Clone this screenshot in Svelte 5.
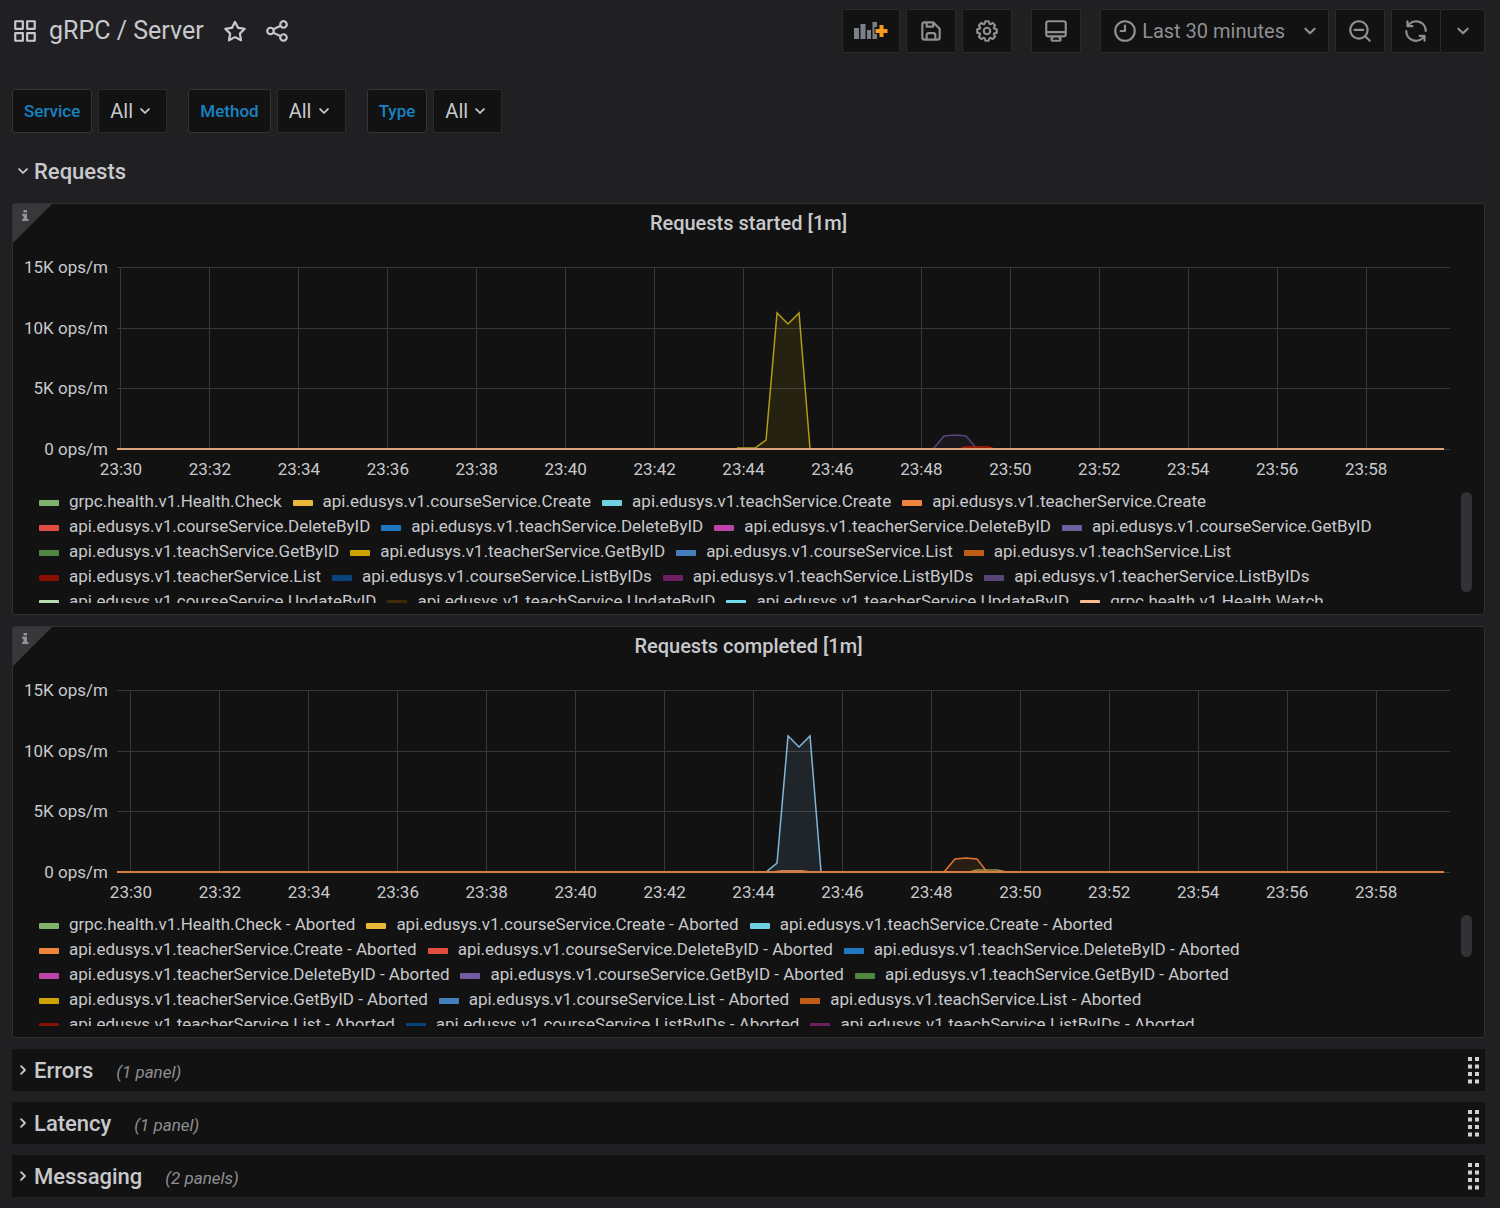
<script lang="ts">
  type Series = { color: string, points: string, fill?: boolean };
  type Panel = {
    title: string,
    offset: number,
    suffix: string,
    legend: [string, string][],
    series: Series[],
    thumb: number
  };

  const icons = {
    apps: "M10,13H3a1,1,0,0,0-1,1v7a1,1,0,0,0,1,1h7a1,1,0,0,0,1-1V14A1,1,0,0,0,10,13ZM9,20H4V15H9ZM21,2H14a1,1,0,0,0-1,1v7a1,1,0,0,0,1,1h7a1,1,0,0,0,1-1V3A1,1,0,0,0,21,2ZM20,9H15V4h5Zm1,4H14a1,1,0,0,0-1,1v7a1,1,0,0,0,1,1h7a1,1,0,0,0,1-1V14A1,1,0,0,0,21,13Zm-1,7H15V15h5ZM10,2H3A1,1,0,0,0,2,3v7a1,1,0,0,0,1,1h7a1,1,0,0,0,1-1V3A1,1,0,0,0,10,2ZM9,9H4V4H9Z",
    star: "M22,9.67A1,1,0,0,0,21.14,9l-5.69-.83L12.9,3a1,1,0,0,0-1.8,0L8.55,8.16,2.86,9a1,1,0,0,0-.81.68,1,1,0,0,0,.25,1l4.13,4-1,5.68A1,1,0,0,0,6.9,21.44L12,18.77l5.1,2.67a.93.93,0,0,0,.46.12,1,1,0,0,0,.59-.19,1,1,0,0,0,.4-1l-1-5.68,4.13-4A1,1,0,0,0,22,9.67Zm-6.15,4a1,1,0,0,0-.29.88l.72,4.2-3.76-2a1.06,1.06,0,0,0-.94,0l-3.76,2,.72-4.2a1,1,0,0,0-.29-.88l-3-3,4.21-.61a1,1,0,0,0,.76-.55L12,5.7l1.88,3.82a1,1,0,0,0,.76.55l4.21.61Z",
    share: "M18,14a4,4,0,0,0-3.08,1.48l-5.1-2.35a3.64,3.64,0,0,0,0-2.26l5.1-2.35A4,4,0,1,0,14,6a4.17,4.17,0,0,0,.07.71L8.79,9.14a4,4,0,1,0,0,5.72l5.28,2.43A4.17,4.17,0,0,0,14,18a4,4,0,1,0,4-4ZM18,4a2,2,0,1,1-2,2A2,2,0,0,1,18,4ZM6,14a2,2,0,1,1,2-2A2,2,0,0,1,6,14Zm12,6a2,2,0,1,1,2-2A2,2,0,0,1,18,20Z",
    save: "M20.71,9.29l-6-6a1,1,0,0,0-.32-.21A1.09,1.09,0,0,0,14,3H6A3,3,0,0,0,3,6V18a3,3,0,0,0,3,3H18a3,3,0,0,0,3-3V10A1,1,0,0,0,20.71,9.29ZM9,5h4V7H9Zm6,14H9V16a1,1,0,0,1,1-1h4a1,1,0,0,1,1,1Zm4-1a1,1,0,0,1-1,1H17V16a3,3,0,0,0-3-3H10a3,3,0,0,0-3,3v3H6a1,1,0,0,1-1-1V6A1,1,0,0,1,6,5H7V8A1,1,0,0,0,8,9h6a1,1,0,0,0,1-1V6.41l4,4Z",
    cog: "M21.32,9.55l-1.89-.63.89-1.78A1,1,0,0,0,20.13,6L18,3.87a1,1,0,0,0-1.15-.19l-1.78.89-.63-1.89A1,1,0,0,0,13.5,2h-3a1,1,0,0,0-.95.68L8.92,4.57,7.14,3.68A1,1,0,0,0,6,3.87L3.87,6a1,1,0,0,0-.19,1.15l.89,1.78-1.89.63A1,1,0,0,0,2,10.5v3a1,1,0,0,0,.68.95l1.89.63-.89,1.78A1,1,0,0,0,3.87,18L6,20.13a1,1,0,0,0,1.15.19l1.78-.89.63,1.89a1,1,0,0,0,.95.68h3a1,1,0,0,0,.95-.68l.63-1.89,1.78.89A1,1,0,0,0,18,20.13L20.13,18a1,1,0,0,0,.19-1.15l-.89-1.78,1.89-.63A1,1,0,0,0,22,13.5v-3A1,1,0,0,0,21.32,9.55ZM20,12.78l-1.2.4A2,2,0,0,0,17.64,16l.57,1.14-1.1,1.1L16,17.64a2,2,0,0,0-2.79,1.16l-.4,1.2H11.22l-.4-1.2A2,2,0,0,0,8,17.64l-1.14.57-1.1-1.1L6.36,16A2,2,0,0,0,5.2,13.18L4,12.78V11.22l1.2-.4A2,2,0,0,0,6.36,8L5.79,6.89l1.1-1.1L8,6.36A2,2,0,0,0,10.82,5.2l.4-1.2h1.56l.4,1.2A2,2,0,0,0,16,6.36l1.14-.57,1.1,1.1L17.64,8a2,2,0,0,0,1.16,2.79l1.2.4ZM12,8a4,4,0,1,0,4,4A4,4,0,0,0,12,8Zm0,6a2,2,0,1,1,2-2A2,2,0,0,1,12,14Z",
    monitor: "M19,2H5A3,3,0,0,0,2,5V15a3,3,0,0,0,3,3H7.64l-.58,1a2,2,0,0,0,0,2,2,2,0,0,0,1.75,1h6.46A2,2,0,0,0,17,21a2,2,0,0,0,0-2l-.59-1H19a3,3,0,0,0,3-3V5A3,3,0,0,0,19,2ZM8.77,20,10,18H14l1.2,2ZM20,15a1,1,0,0,1-1,1H5a1,1,0,0,1-1-1V14H20Zm0-3H4V5A1,1,0,0,1,5,4H19a1,1,0,0,1,1,1Z",
    clock: "M12,2A10,10,0,1,0,22,12,10,10,0,0,0,12,2Zm0,18a8,8,0,1,1,8-8A8,8,0,0,1,12,20ZM12,6a1,1,0,0,0-1,1v4H8a1,1,0,0,0,0,2h4a1,1,0,0,0,1-1V7A1,1,0,0,0,12,6Z",
    down: "M17,9.17a1,1,0,0,0-1.41,0L12,12.71,8.46,9.17a1,1,0,0,0-1.41,0,1,1,0,0,0,0,1.42l4.24,4.24a1,1,0,0,0,1.42,0L17,10.59A1,1,0,0,0,17,9.17Z",
    right: "M14.83,11.29,10.59,7.05a1,1,0,0,0-1.42,0,1,1,0,0,0,0,1.41L12.71,12,9.17,15.54a1,1,0,0,0,0,1.41,1,1,0,0,0,.71.29,1,1,0,0,0,.71-.29l4.24-4.24A1,1,0,0,0,14.83,11.29Z",
    zoomOut: "M21.71,20.29,18,16.61A9,9,0,1,0,16.61,18l3.68,3.68a1,1,0,0,0,1.42,0A1,1,0,0,0,21.71,20.29ZM11,18a7,7,0,1,1,7-7A7,7,0,0,1,11,18Zm4-8H7a1,1,0,0,0,0,2h8a1,1,0,0,0,0-2Z",
    sync: "M19.91,15.51H15.38a1,1,0,0,0,0,2h2.4A8,8,0,0,1,4,12a1,1,0,0,0-2,0,10,10,0,0,0,16.88,7.23V21a1,1,0,0,0,2,0V16.5A1,1,0,0,0,19.91,15.51ZM12,2A10,10,0,0,0,5.12,4.77V3a1,1,0,0,0-2,0V7.5a1,1,0,0,0,1,1h4.5a1,1,0,0,0,0-2H6.22A8,8,0,0,1,20,12a1,1,0,0,0,2,0A10,10,0,0,0,12,2Z"
  };

  const variables = ["Service", "Method", "Type"];
  const selected = $state({ Service: "All", Method: "All", Type: "All" });

  const methods: [string, string][] = [
    ["grpc.health.v1.Health.Check", "#7eb26d"],
    ["api.edusys.v1.courseService.Create", "#eab839"],
    ["api.edusys.v1.teachService.Create", "#6ed0e0"],
    ["api.edusys.v1.teacherService.Create", "#ef843c"],
    ["api.edusys.v1.courseService.DeleteByID", "#e24d42"],
    ["api.edusys.v1.teachService.DeleteByID", "#1f78c1"],
    ["api.edusys.v1.teacherService.DeleteByID", "#ba43a9"],
    ["api.edusys.v1.courseService.GetByID", "#705da0"],
    ["api.edusys.v1.teachService.GetByID", "#508642"],
    ["api.edusys.v1.teacherService.GetByID", "#cca300"],
    ["api.edusys.v1.courseService.List", "#447ebc"],
    ["api.edusys.v1.teachService.List", "#c15c17"],
    ["api.edusys.v1.teacherService.List", "#890f02"],
    ["api.edusys.v1.courseService.ListByIDs", "#0a437c"],
    ["api.edusys.v1.teachService.ListByIDs", "#6d1f62"],
    ["api.edusys.v1.teacherService.ListByIDs", "#584477"],
    ["api.edusys.v1.courseService.UpdateByID", "#b7dbab"],
    ["api.edusys.v1.teachService.UpdateByID", "#3f2b05"],
    ["api.edusys.v1.teacherService.UpdateByID", "#70dbed"],
    ["grpc.health.v1.Health.Watch", "#f9ba8f"]
  ];

  // points live on a 1333 x 182 plot, 182 is zero ops/m
  const panels: Panel[] = [
    {
      title: "Requests started [1m]",
      offset: 4,
      suffix: "",
      legend: methods,
      thumb: 100,
      series: [
        { color: "#584477", points: "816,182 827,169 838,168 849,169 860,182", fill: true },
        { color: "#bf1b00", points: "843,182 848,180 872,180 877,182" },
        { color: "#b29a17", points: "620,181 638,181 649,173 660,46 671,57 682,46 693,182", fill: true },
        { color: "#dba47c", points: "0,182 1327,182" }
      ]
    },
    {
      title: "Requests completed [1m]",
      offset: 14,
      suffix: " - Aborted",
      legend: methods,
      thumb: 42,
      series: [
        { color: "#82b5d8", points: "649,182 660,173 671,46 682,57 693,46 704,182", fill: true },
        { color: "#e0752d", points: "827,182 838,169 849,168 860,169 870,182", fill: true },
        { color: "#9a9640", points: "852,182 860,180 880,180 890,182" },
        { color: "#e5a878", points: "655,182 665,181 685,181 695,182" },
        { color: "#dc7b41", points: "0,182 1327,182" }
      ]
    }
  ];

  const yTicks = ["15K ops/m", "10K ops/m", "5K ops/m", "0 ops/m"];
  const xTicks = Array.from({ length: 15 }, (_, i) => `23:${30 + i * 2}`);

  const xPos = (offset: number, i: number) => `${(((offset + i * 88.93) / 1333) * 100).toFixed(3)}%`;

  const closedRows = [
    { title: "Errors", count: "(1 panel)" },
    { title: "Latency", count: "(1 panel)" },
    { title: "Messaging", count: "(2 panels)" }
  ];
</script>

{#snippet icon(name: keyof typeof icons)}
  <svg class="icon" viewBox="0 0 24 24" aria-hidden="true"><path d={icons[name]} /></svg>
{/snippet}

<div class="dashboard">
  <header class="navbar">
    <div class="nav-title">
      {@render icon("apps")}
      <h1>gRPC / Server</h1>
      <button class="plain star" aria-label="Mark as favorite">{@render icon("star")}</button>
      <button class="plain" aria-label="Share dashboard">{@render icon("share")}</button>
    </div>
    <div class="toolbar">
      <button class="btn add" aria-label="Add panel">
        <svg class="add-icon" viewBox="0 0 34 20" aria-hidden="true">
          <path d="M0 7h5v11H0zM6.500 3h5v15h-5zM13 9h4v9h-4zM18.500 1h4.500v5h-2.500v7H23v5h-4.500z" fill="#7b8087" />
          <path d="M25.500 4h4v4h4v4h-4v4h-4v-4h-4V8h4z" fill="#f99b1c" />
        </svg>
      </button>
      <button class="btn" aria-label="Save dashboard">{@render icon("save")}</button>
      <button class="btn" aria-label="Dashboard settings">{@render icon("cog")}</button>
      <button class="btn apart" aria-label="Cycle view mode">{@render icon("monitor")}</button>
      <button class="btn range apart">
        {@render icon("clock")}
        <span>Last 30 minutes</span>
        {@render icon("down")}
      </button>
      <button class="btn" aria-label="Zoom out">{@render icon("zoomOut")}</button>
      <div class="btn-group">
        <button class="btn" aria-label="Refresh">{@render icon("sync")}</button>
        <button class="btn interval" aria-label="Refresh interval">{@render icon("down")}</button>
      </div>
    </div>
  </header>

  <div class="variables">
    {#each variables as name (name)}
      <div class="variable">
        <label for={`var-${name}`}>{name}</label>
        <div class="select">
          <select id={`var-${name}`} bind:value={selected[name]}>
            <option>All</option>
          </select>
          {@render icon("down")}
        </div>
      </div>
    {/each}
  </div>

  <main>
    <button class="row-open" aria-expanded="true">{@render icon("down")}<span>Requests</span></button>

    {#each panels as panel (panel.title)}
      <section class="panel">
        <svg class="corner" viewBox="0 0 39 39" aria-hidden="true">
          <path d="M0 0h39L0 39z" fill="#38383a" />
          <path d="M10.500 6H14v2.600h-3.500zM9 9.700h5v5.300h1.500v2H9v-2h1.500v-3.300H9z" fill="#929396" />
        </svg>
        <h2>{panel.title}</h2>
        <div class="graph">
          <div class="y-axis">
            {#each yTicks as tick}
              <span>{tick}</span>
            {/each}
          </div>
          <svg class="plot" role="img" aria-label={panel.title}>
            <g class="grid">
              {#each [0, 61, 121, 182] as y}
                <line x1="0" x2="100%" y1={y} y2={y} />
              {/each}
              {#each xTicks as tick, i (tick)}
                <line x1={xPos(panel.offset, i)} x2={xPos(panel.offset, i)} y1="0" y2="182" />
              {/each}
            </g>
            <svg class="series" viewBox="0 0 1333 182" width="100%" height="182" preserveAspectRatio="none">
              {#each panel.series as line}
                <polyline points={line.points} stroke={line.color} fill={line.fill ? line.color : "none"} />
              {/each}
            </svg>
            {#each xTicks as tick, i (tick)}
              <text x={xPos(panel.offset, i)} y="208">{tick}</text>
            {/each}
          </svg>
        </div>
        <div class="legend-wrap">
          <ul class="legend">
            {#each panel.legend as [name, color] (name)}
              <li><i style:background={color}></i>{name}{panel.suffix}</li>
            {/each}
          </ul>
          <div class="thumb" style:height={`${panel.thumb}px`}></div>
        </div>
      </section>
    {/each}

    {#each closedRows as row (row.title)}
      <div class="row-closed">
        <button aria-expanded="false">
          {@render icon("right")}
          <span>{row.title}</span>
          <em>{row.count}</em>
        </button>
        <svg class="grip" viewBox="0 0 11 27" aria-hidden="true">
          {#each [0, 7.5, 15, 22.5] as y}
            <rect x="0" {y} width="4" height="4" />
            <rect x="7" {y} width="4" height="4" />
          {/each}
        </svg>
      </div>
    {/each}
  </main>
</div>

<style>
  :global(body) {
    background: #202022;
  }

  .dashboard {
    min-height: 100vh;
    box-sizing: border-box;
    padding: 0 15px 11px 12px;
    color: #c8c9cc;
    font-family: Roboto, "Liberation Sans", sans-serif;
    font-size: 17px;
  }

  button,
  select {
    font: inherit;
    color: inherit;
    cursor: pointer;
  }

  .icon {
    display: block;
    flex: none;
    width: 26px;
    height: 26px;
    fill: currentColor;
  }

  .navbar {
    display: flex;
    justify-content: space-between;
    height: 62px;
    align-items: center;
  }

  .nav-title {
    display: flex;
    align-items: center;
  }

  h1 {
    margin: 0 18px 0 11px;
    font-size: 25px;
    font-weight: 400;
    line-height: 32px;
  }

  .plain {
    padding: 0;
    border: none;
    background: none;
  }

  .star {
    margin-right: 16px;
  }

  .toolbar {
    display: flex;
    gap: 6px;
  }

  .btn {
    display: flex;
    align-items: center;
    justify-content: center;
    box-sizing: border-box;
    width: 50px;
    height: 44px;
    padding: 0;
    border: 1px solid #2b2b2e;
    border-radius: 2px;
    background: #121212;
    color: #8e8f92;
  }

  .add {
    width: 58px;
  }

  .add-icon {
    width: 34px;
    height: 20px;
  }

  .apart {
    margin-left: 13px;
  }

  .range {
    width: auto;
    padding: 0 5px 0 11px;
    font-size: 20px;
  }

  .range span {
    margin: 0 12px 0 4px;
  }

  .btn-group {
    display: flex;
  }

  .interval {
    width: 44px;
    border-left: none;
  }

  .variables {
    display: flex;
    flex-wrap: wrap;
    gap: 21px;
    margin-top: 27px;
  }

  .variable {
    display: flex;
    gap: 6px;
  }

  .variable label {
    padding: 0 11px;
    border: 1px solid #343437;
    border-radius: 3px;
    background: #121212;
    color: #1783c2;
    font-weight: 500;
    line-height: 42px;
  }

  .select {
    display: grid;
    align-items: center;
    width: 67px;
    border: 1px solid #2b2b2e;
    background: #121212;
  }

  .select select,
  .select .icon {
    grid-area: 1 / 1;
  }

  .select select {
    height: 42px;
    padding: 0 11px;
    border: none;
    background: none;
    appearance: none;
    font-size: 20px;
  }

  .select .icon {
    justify-self: end;
    width: 22px;
    height: 22px;
    margin-right: 10px;
    pointer-events: none;
  }

  main {
    display: flex;
    flex-direction: column;
    gap: 11px;
    margin-top: 17px;
  }

  .row-open,
  .row-closed button {
    display: flex;
    align-items: center;
    height: 42px;
    padding: 0;
    border: none;
    background: none;
    font-size: 22px;
    font-weight: 500;
  }

  .row-open .icon,
  .row-closed .icon {
    width: 22px;
    height: 22px;
  }

  .panel {
    position: relative;
    border: 1px solid #303033;
    border-radius: 3px;
    background: #121212;
  }

  .corner {
    position: absolute;
    top: 0;
    left: 0;
    width: 39px;
    height: 39px;
  }

  h2 {
    margin: 0;
    font-size: 20px;
    font-weight: 500;
    line-height: 38px;
    text-align: center;
  }

  .graph {
    display: flex;
    gap: 9px;
    padding: 15px 34px 0 11px;
  }

  .y-axis {
    display: flex;
    flex-direction: column;
    justify-content: space-between;
    height: 202px;
    line-height: 20px;
    text-align: right;
    white-space: nowrap;
  }

  .plot {
    flex: 1;
    min-width: 0;
    height: 222px;
    margin-top: 10px;
    overflow: visible;
  }

  .plot text {
    fill: currentColor;
    text-anchor: middle;
  }

  .grid line {
    stroke: #38383a;
    shape-rendering: crispEdges;
  }

  .series {
    overflow: visible;
  }

  .series polyline {
    stroke-width: 1.5;
    fill-opacity: 0.12;
    vector-effect: non-scaling-stroke;
  }

  .series polyline:last-child {
    stroke-width: 2;
  }

  .legend-wrap {
    display: flex;
    justify-content: space-between;
    height: 114px;
    padding: 0 12px 11px 26px;
  }

  .legend {
    display: flex;
    flex: 1;
    flex-wrap: wrap;
    align-content: flex-start;
    column-gap: 11px;
    height: 114px;
    margin: 0 12px 0 0;
    padding: 0;
    overflow: hidden;
    list-style: none;
    line-height: 25px;
  }

  .legend li {
    display: flex;
    align-items: center;
    white-space: pre;
  }

  .legend i {
    width: 20px;
    height: 6px;
    margin: 2px 10px 0 0;
    border-radius: 1px;
  }

  .thumb {
    width: 11px;
    margin-top: 3px;
    border-radius: 6px;
    background: #303236;
  }

  .row-closed {
    display: flex;
    align-items: center;
    justify-content: space-between;
    height: 42px;
    padding-right: 6px;
    background: #121212;
  }

  .row-closed em {
    margin-left: 23px;
    padding-top: 3px;
    color: #8e8f92;
    font-size: 17px;
    font-weight: 400;
  }

  .grip {
    width: 11px;
    height: 27px;
    fill: #d0d1d3;
  }
</style>
